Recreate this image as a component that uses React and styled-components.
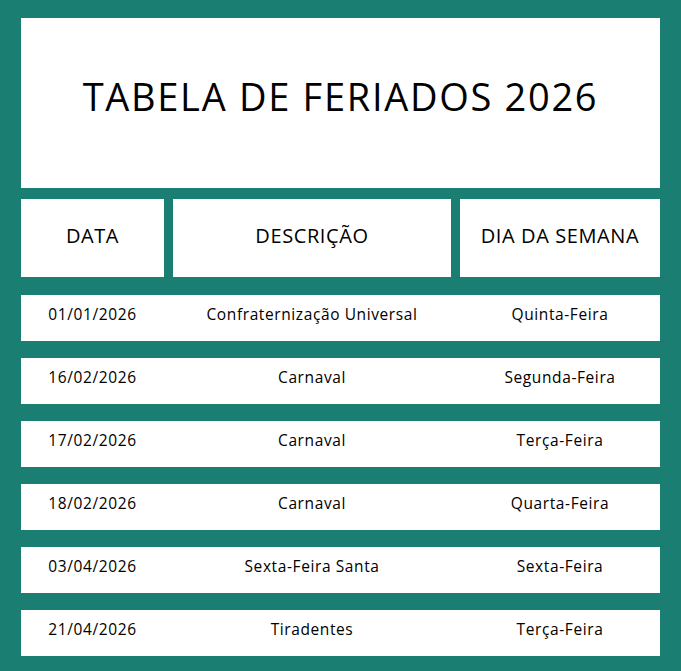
import React from 'react';
import styled, { createGlobalStyle } from 'styled-components';

const GlobalStyle = createGlobalStyle`
    html, body {
        margin: 0;
        padding: 0;
        background-color: #1a7f72;
    }
    body {
        font-family: "Open Sans", "Noto Sans", sans-serif;
        color: #000;
    }
`;

const Page = styled.div`
    width: 681px;
    min-height: 671px;
    box-sizing: border-box;
    padding: 18px 21px 15px;
    background-color: #1a7f72;
`;

const TitleBox = styled.div`
    height: 170px;
    background-color: #fff;
    display: flex;
    align-items: center;
    justify-content: center;
    padding-bottom: 14px;
    box-sizing: border-box;
    h1{
        margin: 0;
        font-size: 38px;
        font-weight: 400;
        letter-spacing: 1.7px;
    }
`;

const Columns = styled.div`
    display: grid;
    grid-template-columns: 143px 278px 200px;
    column-gap: 9px;
`;

const HeaderRow = styled(Columns)`
    margin-top: 11px;
    height: 78px;
`;

const HeaderCell = styled.div`
    background-color: #fff;
    display: flex;
    align-items: center;
    justify-content: center;
    padding-bottom: 6px;
    box-sizing: border-box;
    font-size: 20px;
    letter-spacing: 0.6px;
    text-transform: uppercase;
`;

const Body = styled.div`
    margin-top: 18px;
    display: flex;
    flex-direction: column;
    gap: 17px;
`;

const Row = styled(Columns)`
    height: 46px;
    background-color: #fff;
`;

const Cell = styled.div`
    display: flex;
    align-items: center;
    justify-content: center;
    padding-bottom: 8px;
    box-sizing: border-box;
    font-size: 15.5px;
    letter-spacing: 0.6px;
    white-space: nowrap;
`;

const feriados = [
    { data: '01/01/2026', descricao: 'Confraternização Universal', dia: 'Quinta-Feira' },
    { data: '16/02/2026', descricao: 'Carnaval', dia: 'Segunda-Feira' },
    { data: '17/02/2026', descricao: 'Carnaval', dia: 'Terça-Feira' },
    { data: '18/02/2026', descricao: 'Carnaval', dia: 'Quarta-Feira' },
    { data: '03/04/2026', descricao: 'Sexta-Feira Santa', dia: 'Sexta-Feira' },
    { data: '21/04/2026', descricao: 'Tiradentes', dia: 'Terça-Feira' },
];

export default function App() {
    return (
        <>
            <GlobalStyle />
            <Page>
                <TitleBox><h1>TABELA DE FERIADOS 2026</h1></TitleBox>
                <HeaderRow>
                    <HeaderCell>Data</HeaderCell>
                    <HeaderCell>Descrição</HeaderCell>
                    <HeaderCell>Dia da Semana</HeaderCell>
                </HeaderRow>
                <Body>
                    {feriados.map(f => (
                        <Row key={f.data}>
                            <Cell>{f.data}</Cell>
                            <Cell>{f.descricao}</Cell>
                            <Cell>{f.dia}</Cell>
                        </Row>
                    ))}
                </Body>
            </Page>
        </>
    );
}
